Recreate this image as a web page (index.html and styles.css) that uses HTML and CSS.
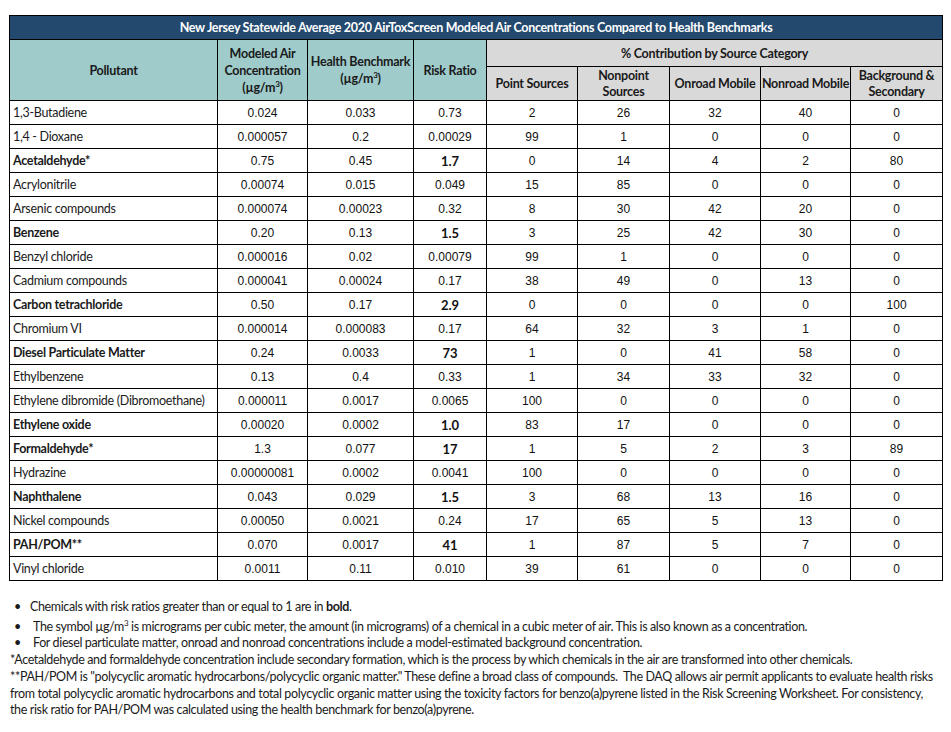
FILE: index.html
```html
<!DOCTYPE html>
<html>
<head>
<meta charset="utf-8">
<link rel="stylesheet" href="styles.css">
</head>
<body>
<div class="page">
<table class="tbl">
<colgroup>
<col style="width:208px"><col style="width:90px"><col style="width:106px"><col style="width:73px"><col style="width:91px"><col style="width:92px"><col style="width:91px"><col style="width:90px"><col style="width:92px">
</colgroup>
<thead>
<tr><th colspan="9" class="title">New Jersey Statewide Average 2020 AirToxScreen Modeled Air Concentrations Compared to Health Benchmarks</th></tr>
<tr class="h1">
<th rowspan="2" class="teal">Pollutant</th>
<th rowspan="2" class="teal">Modeled Air Concentration (µg/m<sup>3</sup>)</th>
<th rowspan="2" class="teal">Health Benchmark (µg/m<sup>3</sup>)</th>
<th rowspan="2" class="teal">Risk Ratio</th>
<th colspan="5" class="gray">% Contribution by Source Category</th>
</tr>
<tr class="h2">
<th class="gray">Point Sources</th>
<th class="gray">Nonpoint Sources</th>
<th class="gray">Onroad Mobile</th>
<th class="gray">Nonroad Mobile</th>
<th class="gray">Background &amp; Secondary</th>
</tr>
</thead>
<tbody>
<tr><td class="name">1,3-Butadiene</td><td>0.024</td><td>0.033</td><td>0.73</td><td>2</td><td>26</td><td>32</td><td>40</td><td>0</td></tr>
<tr><td class="name">1,4 - Dioxane</td><td>0.000057</td><td>0.2</td><td>0.00029</td><td>99</td><td>1</td><td>0</td><td>0</td><td>0</td></tr>
<tr><td class="name b">Acetaldehyde*</td><td>0.75</td><td>0.45</td><td class="rb">1.7</td><td>0</td><td>14</td><td>4</td><td>2</td><td>80</td></tr>
<tr><td class="name">Acrylonitrile</td><td>0.00074</td><td>0.015</td><td>0.049</td><td>15</td><td>85</td><td>0</td><td>0</td><td>0</td></tr>
<tr><td class="name">Arsenic compounds</td><td>0.000074</td><td>0.00023</td><td>0.32</td><td>8</td><td>30</td><td>42</td><td>20</td><td>0</td></tr>
<tr><td class="name b">Benzene</td><td>0.20</td><td>0.13</td><td class="rb">1.5</td><td>3</td><td>25</td><td>42</td><td>30</td><td>0</td></tr>
<tr><td class="name">Benzyl chloride</td><td>0.000016</td><td>0.02</td><td>0.00079</td><td>99</td><td>1</td><td>0</td><td>0</td><td>0</td></tr>
<tr><td class="name">Cadmium compounds</td><td>0.000041</td><td>0.00024</td><td>0.17</td><td>38</td><td>49</td><td>0</td><td>13</td><td>0</td></tr>
<tr><td class="name b">Carbon tetrachloride</td><td>0.50</td><td>0.17</td><td class="rb">2.9</td><td>0</td><td>0</td><td>0</td><td>0</td><td>100</td></tr>
<tr><td class="name">Chromium VI</td><td>0.000014</td><td>0.000083</td><td>0.17</td><td>64</td><td>32</td><td>3</td><td>1</td><td>0</td></tr>
<tr><td class="name b">Diesel Particulate Matter</td><td>0.24</td><td>0.0033</td><td class="rb">73</td><td>1</td><td>0</td><td>41</td><td>58</td><td>0</td></tr>
<tr><td class="name">Ethylbenzene</td><td>0.13</td><td>0.4</td><td>0.33</td><td>1</td><td>34</td><td>33</td><td>32</td><td>0</td></tr>
<tr><td class="name">Ethylene dibromide (Dibromoethane)</td><td>0.000011</td><td>0.0017</td><td>0.0065</td><td>100</td><td>0</td><td>0</td><td>0</td><td>0</td></tr>
<tr><td class="name b">Ethylene oxide</td><td>0.00020</td><td>0.0002</td><td class="rb">1.0</td><td>83</td><td>17</td><td>0</td><td>0</td><td>0</td></tr>
<tr><td class="name b">Formaldehyde*</td><td>1.3</td><td>0.077</td><td class="rb">17</td><td>1</td><td>5</td><td>2</td><td>3</td><td>89</td></tr>
<tr><td class="name">Hydrazine</td><td>0.00000081</td><td>0.0002</td><td>0.0041</td><td>100</td><td>0</td><td>0</td><td>0</td><td>0</td></tr>
<tr><td class="name b">Naphthalene</td><td>0.043</td><td>0.029</td><td class="rb">1.5</td><td>3</td><td>68</td><td>13</td><td>16</td><td>0</td></tr>
<tr><td class="name">Nickel compounds</td><td>0.00050</td><td>0.0021</td><td>0.24</td><td>17</td><td>65</td><td>5</td><td>13</td><td>0</td></tr>
<tr><td class="name b">PAH/POM**</td><td>0.070</td><td>0.0017</td><td class="rb">41</td><td>1</td><td>87</td><td>5</td><td>7</td><td>0</td></tr>
<tr><td class="name">Vinyl chloride</td><td>0.0011</td><td>0.11</td><td>0.010</td><td>39</td><td>61</td><td>0</td><td>0</td><td>0</td></tr>
</tbody>
</table>
<div class="notes">
<div class="bul bul1"><span class="dot">•</span><span>Chemicals with risk ratios greater than or equal to 1 are in <b>bold</b>.</span></div>
<div class="bul bul2"><span class="dot">•</span><span>The symbol µg/m<sup>3</sup> is micrograms per cubic meter, the amount (in micrograms) of a chemical in a cubic meter of air. This is also known as a concentration.</span></div>
<div class="bul bul3"><span class="dot">•</span><span>For diesel particulate matter, onroad and nonroad concentrations include a model-estimated background concentration.</span></div>
<div class="line">*Acetaldehyde and formaldehyde concentration include secondary formation, which is the process by which chemicals in the air are transformed into other chemicals.</div>
<div class="line">**PAH/POM is "polycyclic aromatic hydrocarbons/polycyclic organic matter." These define a broad class of compounds.&nbsp; The DAQ allows air permit applicants to evaluate health risks</div>
<div class="line">from total polycyclic aromatic hydrocarbons and total polycyclic organic matter using the toxicity factors for benzo(a)pyrene listed in the Risk Screening Worksheet. For consistency,</div>
<div class="line">the risk ratio for PAH/POM was calculated using the health benchmark for benzo(a)pyrene.</div>
</div>
</div>
</body>
</html>
```
FILE: styles.css
```css
html, body { margin: 0; padding: 0; background: #fff; }
.page { padding: 15px 0 0 9px; }
.tbl {
  border-collapse: collapse;
  table-layout: fixed;
  width: 933px;
  font-family: "Liberation Sans", Arial, sans-serif;
  font-size: 12px;
  color: #111;
}
.tbl th, .tbl td {
  border: 1px solid #000;
  padding: 0;
  text-align: center;
  vertical-align: middle;
}
.tbl th {
  font-family: "Lato", "Noto Sans", sans-serif;
  font-weight: 700;
  font-size: 12.5px;
  line-height: 17px;
  letter-spacing: -0.25px;
  color: #1a1a1a;
}
sup {
  font-size: 8px;
  line-height: 1;
  vertical-align: baseline;
  position: relative;
  top: -5px;
}
.title {
  background: #24496f;
  color: #fff !important;
  height: 23px;
  font-size: 12.5px !important;
  letter-spacing: -0.3px !important;
}
.teal { background: #9fcbcb; }
.gray { background: #d9d9d9; }
.h1 .gray { height: 26px; }
.h2 th { height: 33px; line-height: 16px; }
.tbl td { height: 23px; }
.tbl td.name {
  text-align: left;
  padding-left: 3px;
  font-family: "Lato", "Noto Sans", sans-serif;
  font-size: 12.5px;
  letter-spacing: -0.3px;
  color: #1a1a1a;
}
.tbl td.b { font-weight: 700; }
.tbl td.rb { font-weight: 700; font-family: "Lato", "Noto Sans", sans-serif; font-size: 13px; }
.notes {
  font-family: "Lato", "Noto Sans", sans-serif;
  font-size: 12.5px;
  letter-spacing: -0.37px;
  color: #1a1a1a;
  padding-top: 18px;
  line-height: 16.7px;
}
.bul { display: flex; white-space: nowrap; }
.dot { width: 21px; padding-left: 5px; box-sizing: border-box; flex: none; }
.bul2 .dot, .bul3 .dot { width: 24px; }
.bul1 { margin-bottom: 3px; }
.line { white-space: nowrap; padding-left: 1px; }
```
